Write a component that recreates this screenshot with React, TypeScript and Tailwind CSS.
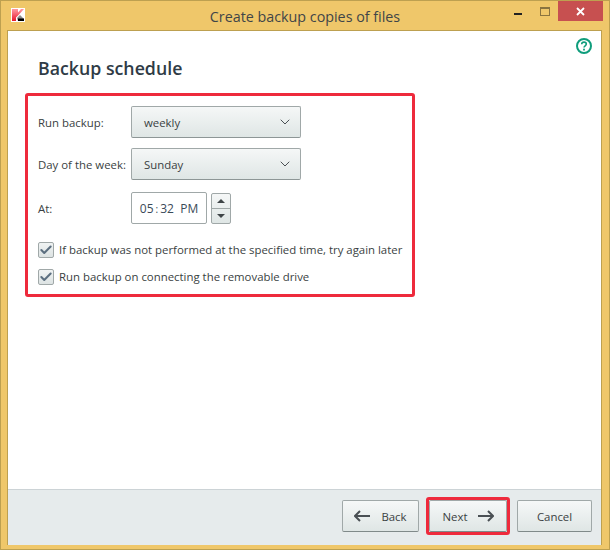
import { ChevronDown, Check } from 'lucide-react'

const FONT = "font-['Open_Sans','Noto_Sans',sans-serif]"

function KasperskyLogo() {
  return (
    <svg width="14" height="14" viewBox="0 0 14 14" className="ml-[10px] mt-[7px]">
      <defs>
        <linearGradient id="kred" x1="0" y1="0" x2="0" y2="1">
          <stop offset="0" stopColor="#ff9aa2" />
          <stop offset="1" stopColor="#e8192c" />
        </linearGradient>
      </defs>
      <rect width="14" height="14" fill="#fff" />
      <path d="M1 1h6v3.5L10 1h3L8 6.5 5 9.5V13H1z" fill="url(#kred)" />
      <path d="M6 10l3-3 4 4v2H7z" fill="#8a8a8a" />
      <rect x="7" y="10.5" width="6" height="2.5" fill="#000" />
    </svg>
  )
}

function HelpIcon() {
  return (
    <svg width="16" height="16" viewBox="0 0 16 16" fill="none">
      <circle cx="8" cy="8" r="7" stroke="#0f9d7c" strokeWidth="2" />
      <path d="M5.7 6.2c0-1.3 1-2.1 2.3-2.1s2.3.8 2.3 2c0 1.8-2.3 1.7-2.3 3.5" stroke="#0f9d7c" strokeWidth="1.6" />
      <rect x="7.1" y="10.7" width="1.8" height="1.8" fill="#0f9d7c" />
    </svg>
  )
}

function ArrowIcon({ left }: { left?: boolean }) {
  return (
    <svg width="16" height="12" viewBox="0 0 16 12" fill="none" className={left ? '-scale-x-100' : ''}>
      <path d="M0 6h15M10 1l5 5-5 5" stroke="#4a5054" strokeWidth="2" />
    </svg>
  )
}

function Select({ value }: { value: string }) {
  return (
    <div className="w-[170px] h-[32px] flex items-center justify-between pl-[12px] pr-[7px] rounded-[2px] border border-[#a0a8a8] border-b-[#8d9696] bg-gradient-to-b from-[#f5f7f7] to-[#dfe6e5] text-[#3a3f42]">
      <span className="pt-[2px]">{value}</span>
      <ChevronDown className="w-[16px] h-[16px] text-[#4a5054]" strokeWidth={1.5} />
    </div>
  )
}

function Row({ label, children }: { label: string; children: React.ReactNode }) {
  return (
    <div className="flex items-center">
      <span className="w-[93px] shrink-0 pt-[2px] whitespace-nowrap text-[#3a3f42]">{label}</span>
      {children}
    </div>
  )
}

function CheckRow({ label }: { label: string }) {
  return (
    <div className="flex items-center gap-[5px]">
      <div className="w-[16px] h-[16px] flex items-center justify-center rounded-[2px] border border-[#a0a8a8] bg-gradient-to-b from-[#f0f3f3] to-[#dde3e3]">
        <Check className="w-[14px] h-[14px] text-[#5c6f80]" strokeWidth={3.5} />
      </div>
      <span className="whitespace-nowrap text-[#3a3f42]">{label}</span>
    </div>
  )
}

function Button({ children, className }: { children: React.ReactNode; className: string }) {
  return (
    <div className={`h-[32px] flex items-center justify-center rounded-[2px] border border-[#a0a8a8] border-b-[#808a8a] bg-gradient-to-b from-[#f6f8f8] to-[#dfe6e5] text-[#3a3f42] ${className}`}>
      {children}
    </div>
  )
}

export default function App() {
  return (
    <div className={`${FONT} w-[610px] h-[550px] flex flex-col bg-[#efc76a] border border-[#bda050] text-[11.4px] overflow-hidden`}>
      {/* Title bar */}
      <div className="h-[29px] shrink-0 flex items-start">
        <div className="flex-1 min-w-0">
          <KasperskyLogo />
        </div>
        <div className="pt-[5px] text-[14.3px] text-[#3f4548] whitespace-nowrap">Create backup copies of files</div>
        <div className="flex-1 min-w-0 flex justify-end">
          <div className="w-[45px] h-[20px] pl-[25px] pt-[12px]">
            <div className="w-[8px] h-[2px] bg-[#222]" />
          </div>
          <div className="w-[24px] h-[20px] pl-[6px] pt-[6px]">
            <div className="w-[10px] h-[9px] border border-[#8a7440] border-t-2" />
          </div>
          <div className="w-[45px] h-[20px] mr-[6px] flex items-center justify-center bg-[#c75050]">
            <svg width="9" height="9" viewBox="0 0 9 9">
              <path d="M1 1l7 7M8 1l-7 7" stroke="#fff" strokeWidth="1.8" />
            </svg>
          </div>
        </div>
      </div>

      {/* Body */}
      <div className="flex-1 ml-[6px] mr-[7px] mb-[4px] flex flex-col bg-white border border-[#bda050] border-b-0 min-h-0">
        <div className="flex-1 relative pt-[25px]">
          <div className="absolute top-[7px] right-[9px]">
            <HelpIcon />
          </div>
          <h1 className="ml-[30px] text-[17.75px] leading-[24px] font-semibold text-[#2f3b46]">Backup schedule</h1>
          <div className="ml-[17px] mt-[13px] w-[390px] h-[204px] rounded-[3px] border-[3px] border-[#ee2a3c] pl-[10px] pt-[10px] flex flex-col">
            <Row label="Run backup:">
              <Select value="weekly" />
            </Row>
            <div className="mt-[10px]">
              <Row label="Day of the week:">
                <Select value="Sunday" />
              </Row>
            </div>
            <div className="mt-[12px]">
              <Row label="At:">
                <div className="w-[76px] h-[32px] pt-[2px] flex items-center justify-center rounded-[2px] border border-[#a0a8a8] text-[#3a4a58] text-[12px] whitespace-nowrap">
                  05<span className="mx-[2px] text-[10px]">:</span>32&nbsp;&nbsp;PM
                </div>
                <div className="ml-[4px] w-[20px] h-[31px] flex flex-col rounded-[2px] border border-[#a0a8a8] bg-gradient-to-b from-[#f5f7f7] to-[#dfe6e5]">
                  <div className="flex-1 flex items-center justify-center border-b border-[#a0a8a8]">
                    <div className="w-0 h-0 border-x-[4px] border-x-transparent border-b-[4px] border-b-[#3f4548]" />
                  </div>
                  <div className="flex-1 flex items-center justify-center">
                    <div className="w-0 h-0 border-x-[4px] border-x-transparent border-t-[4px] border-t-[#3f4548]" />
                  </div>
                </div>
              </Row>
            </div>
            <div className="mt-[17px]">
              <CheckRow label="If backup was not performed at the specified time, try again later" />
            </div>
            <div className="mt-[10px]">
              <CheckRow label="Run backup on connecting the removable drive" />
            </div>
          </div>
        </div>

        {/* Footer */}
        <div className="h-[56px] shrink-0 flex items-start justify-end pr-[9px] pt-[10px] bg-[#e6ebec] border-t border-[#ccd3d6]">
          <Button className="w-[77px] gap-[11px]">
            <ArrowIcon left />
            <span className="pt-[2px]">Back</span>
          </Button>
          <div className="ml-[7px] -mt-[3px] rounded-[3px] border-[3px] border-[#ee2a3c]">
            <Button className="w-[78px] gap-[10px]">
              <span className="pt-[2px]">Next</span>
              <ArrowIcon />
            </Button>
          </div>
          <Button className="ml-[7px] w-[75px]">
            <span className="pt-[2px]">Cancel</span>
          </Button>
        </div>
      </div>
    </div>
  )
}
